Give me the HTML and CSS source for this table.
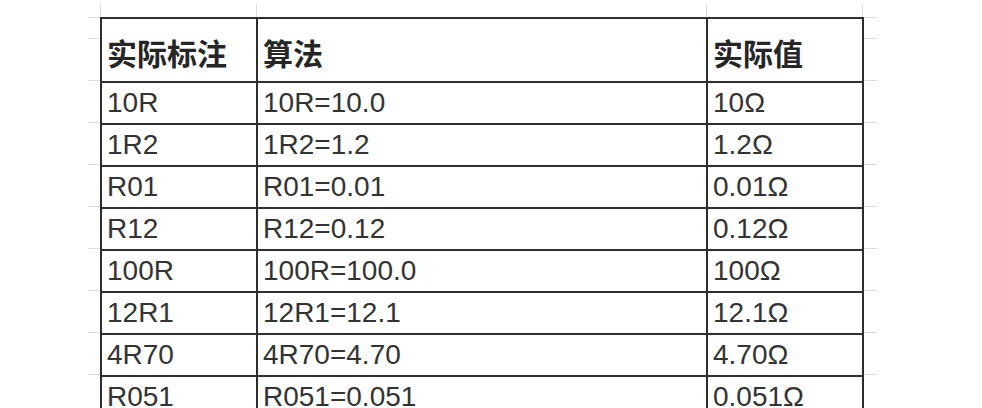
FILE: index.html
```html
<!DOCTYPE html>
<html lang="zh">
<head>
<meta charset="utf-8">
<title>电阻标注</title>
<link rel="stylesheet" href="styles.css">
</head>
<body>
<div class="sheet">
  <table class="grid">
    <colgroup>
      <col class="c-mark">
      <col class="c-calc">
      <col class="c-val">
    </colgroup>
    <thead>
      <tr><th>实际标注</th><th>算法</th><th>实际值</th></tr>
    </thead>
    <tbody>
      <tr><td>10R</td><td>10R=10.0</td><td>10Ω</td></tr>
      <tr><td>1R2</td><td>1R2=1.2</td><td>1.2Ω</td></tr>
      <tr><td>R01</td><td>R01=0.01</td><td>0.01Ω</td></tr>
      <tr><td>R12</td><td>R12=0.12</td><td>0.12Ω</td></tr>
      <tr><td>100R</td><td>100R=100.0</td><td>100Ω</td></tr>
      <tr><td>12R1</td><td>12R1=12.1</td><td>12.1Ω</td></tr>
      <tr><td>4R70</td><td>4R70=4.70</td><td>4.70Ω</td></tr>
      <tr><td>R051</td><td>R051=0.051</td><td>0.051Ω</td></tr>
    </tbody>
  </table>
</div>
</body>
</html>
```

FILE: styles.css
```css
html, body {
  margin: 0;
  padding: 0;
  background: #fff;
  overflow: hidden;
}

body {
  font-family: "Liberation Sans", "Noto Sans CJK SC", sans-serif;
  color: #333;
}

.sheet {
  width: fit-content;
  margin-left: 88px;
  padding: 17px 13px 0 12px;
  background-color: #fff;
  background-image:
    linear-gradient(#dcdcdc, #dcdcdc),
    linear-gradient(#dcdcdc, #dcdcdc),
    linear-gradient(#dcdcdc, #dcdcdc),
    linear-gradient(#dcdcdc, #dcdcdc),
    linear-gradient(#dcdcdc, #dcdcdc),
    linear-gradient(to bottom, #dcdcdc 0, #dcdcdc 1px, transparent 1px);
  background-repeat: no-repeat, no-repeat, no-repeat, no-repeat, no-repeat, repeat-y;
  background-size:
    1px 17px,
    1px 17px,
    1px 17px,
    1px 17px,
    100% 1px,
    100% 42px;
  background-position:
    12px 4px,
    168px 4px,
    618px 4px,
    774px 4px,
    0 17px,
    0 80px;
}

.grid {
  border-collapse: collapse;
  background: #fff;
  font-size: 28px;
}

.c-mark { width: 156px; }
.c-calc { width: 450px; }
.c-val { width: 156px; }

.grid th,
.grid td {
  border: 2px solid #2e2e2e;
  padding: 0 5px;
  text-align: left;
  white-space: nowrap;
}

.grid th {
  height: 59px;
  font-size: 30px;
  font-weight: bold;
  color: #262626;
  padding-top: 3px;
}

.grid td {
  height: 40px;
  line-height: 40px;
}
```
